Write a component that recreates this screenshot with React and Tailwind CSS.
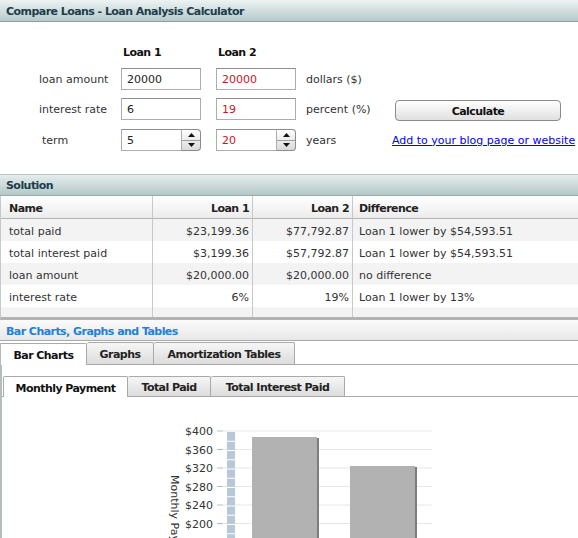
import React from "react";

function Box({ v, red, className = "" }) {
  return (
    <div
      className={`h-[22px] border border-[#adadad] border-t-[#8f8f8f] bg-white flex items-center pl-[5px] pt-[2px] ${red ? "text-[#d0141c]" : "text-[#222]"} ${className}`}
    >
      {v}
    </div>
  );
}

function Spin({ v, red }) {
  return (
    <div className="flex w-[80px] h-[22px]">
      <Box v={v} red={red} className="w-[61px]" />
      <div className="w-[19px] h-[22px] border border-[#8c8c8c] border-l-0 rounded-r-[4px] bg-linear-to-b from-white to-[#dadada] flex flex-col">
        <div className="flex-1 flex items-center justify-center border-b border-[#a0a0a0]">
          <svg width="7" height="4" viewBox="0 0 7 4"><path d="M0 4 L3.5 0 L7 4 Z" fill="#111" /></svg>
        </div>
        <div className="flex-1 flex items-center justify-center">
          <svg width="7" height="4" viewBox="0 0 7 4"><path d="M0 0 L3.5 4 L7 0 Z" fill="#111" /></svg>
        </div>
      </div>
    </div>
  );
}

function Row({ label, labelCls = "", left, right, unit, extra, className = "" }) {
  return (
    <div className={`flex items-center h-[22px] pl-[39px] ${className}`}>
      <div className={`w-[82px] pt-[2px] text-[#333] ${labelCls}`}>{label}</div>
      {left}
      <div className="w-[15px]" />
      {right}
      <div className="w-[10px]" />
      <div className="w-[86px] pt-[2px] text-[#333]">{unit}</div>
      {extra}
    </div>
  );
}

const rows = [
  ["total paid", "$23,199.36", "$77,792.87", "Loan 1 lower by $54,593.51"],
  ["total interest paid", "$3,199.36", "$57,792.87", "Loan 1 lower by $54,593.51"],
  ["loan amount", "$20,000.00", "$20,000.00", "no difference"],
  ["interest rate", "6%", "19%", "Loan 1 lower by 13%"],
];

function Chart() {
  const X = (x) => x - 2;
  const Y = (y) => y - 396;
  const ticks = [0, 1, 2, 3, 4, 5, 6].map((i) => ({ py: 430 + i * 18.5, label: `$${400 - 40 * i}` }));
  const seps = [];
  for (let y = 431 + 9.25; y < 540; y += 9.25) seps.push(y);
  return (
    <svg width="576" height="142" className="block" style={{ fontFamily: "'DejaVu Sans', Verdana, sans-serif" }}>
      {ticks.map((t) => (
        <g key={t.label}>
          <line x1={X(223)} x2={X(432)} y1={Y(t.py)} y2={Y(t.py)} stroke="#e6e6e6" strokeWidth="1" />
          <line x1={X(217)} x2={X(223)} y1={Y(t.py)} y2={Y(t.py)} stroke="#bdbdbd" strokeWidth="1" />
          <text x={X(213)} y={Y(t.py) + 4} textAnchor="end" fontSize="11" fill="#333">
            {t.label}
          </text>
        </g>
      ))}
      <rect x={X(227)} y={Y(431)} width="8" height="120" fill="#b7c9d8" />
      {seps.map((y) => (
        <line key={y} x1={X(227)} x2={X(235)} y1={Y(y)} y2={Y(y)} stroke="#ffffff" strokeWidth="1" />
      ))}
      <rect x={X(254)} y={Y(437)} width="65" height="120" fill="#7d7d7d" />
      <rect x={X(252)} y={Y(436)} width="65" height="120" fill="#b2b2b2" />
      <rect x={X(352)} y={Y(466)} width="65" height="120" fill="#7d7d7d" />
      <rect x={X(350)} y={Y(465)} width="65" height="120" fill="#b2b2b2" />
      <text transform={`translate(${X(171)} ${Y(474)}) rotate(90)`} fontSize="11" fill="#333">
        Monthly Payment
      </text>
    </svg>
  );
}

const B = "font-bold tracking-[-0.55px]";

export default function App() {
  return (
    <div className="w-[578px] h-[538px] overflow-hidden bg-white font-['DejaVu_Sans',Verdana,sans-serif] text-[11px] leading-[14px] text-[#333] flex flex-col">
      <div className={`h-[22px] shrink-0 bg-linear-to-b from-[#edf3f3] to-[#b6caca] border-b border-[#8e9e9e] flex items-center pl-[6px] pt-[2px] text-[#1d3d4c] ${B}`}>
        Compare Loans - Loan Analysis Calculator
      </div>

      <div className={`flex items-center h-[14px] mt-[22px] pl-[39px] pt-[3px] text-[#111] shrink-0 ${B}`}>
        <div className="w-[84px]" />
        <div className="w-[95px]">Loan 1</div>
        <div>Loan 2</div>
      </div>

      <Row className="mt-[10px] shrink-0" label="loan amount" left={<Box v="20000" className="w-[80px]" />} right={<Box v="20000" red className="w-[80px]" />} unit="dollars ($)" />
      <Row
        className="mt-[8px] shrink-0"
        label="interest rate"
        left={<Box v="6" className="w-[80px]" />}
        right={<Box v="19" red className="w-[80px]" />}
        unit="percent (%)"
        extra={
          <div className={`ml-[3px] mt-[3px] w-[166px] h-[21px] pt-[2px] rounded-[4px] border border-[#8b8b8b] bg-linear-to-b from-white to-[#e0e0e0] flex items-center justify-center text-[#111] ${B}`}>
            Calculate
          </div>
        }
      />
      <Row
        className="mt-[9px] shrink-0"
        label="term"
        labelCls="pl-[3px]"
        left={<Spin v="5" />}
        right={<Spin v="20" red />}
        unit="years"
        extra={<a className="text-[#0000ee] underline whitespace-nowrap pt-[1px]">Add to your blog page or website</a>}
      />

      <div className={`mt-[23px] h-[22px] shrink-0 bg-linear-to-b from-[#e4ecec] to-[#b4c9c9] border-t border-[#b9c4c4] border-b border-b-[#9aa8a8] flex items-center pl-[6px] pt-[2px] text-[#1d3d4c] ${B}`}>
        Solution
      </div>

      <div className="grid grid-cols-[152px_100px_100px_1fr] border-l border-[#c8c8c8] border-b-[3px] border-b-[#b3b3b3] shrink-0">
        <div className={`h-[23px] flex items-center pl-[8px] pt-[3px] text-[#222] border-r border-[#c8c8c8] border-b border-b-[#b5b5b5] bg-linear-to-b from-white to-[#ececec] ${B}`}>Name</div>
        <div className={`h-[23px] flex items-center justify-end pr-[3px] pt-[3px] text-[#222] border-r border-[#c8c8c8] border-b border-b-[#b5b5b5] bg-linear-to-b from-white to-[#ececec] ${B}`}>Loan 1</div>
        <div className={`h-[23px] flex items-center justify-end pr-[3px] pt-[3px] text-[#222] border-r border-[#c8c8c8] border-b border-b-[#b5b5b5] bg-linear-to-b from-white to-[#ececec] ${B}`}>Loan 2</div>
        <div className={`h-[23px] flex items-center pl-[6px] pt-[3px] text-[#222] border-b border-b-[#b5b5b5] bg-linear-to-b from-white to-[#ececec] ${B}`}>Difference</div>
        {rows.map((r, i) => {
          const bg = i % 2 === 0 ? "bg-[#f3f3f3]" : "bg-white";
          return (
            <React.Fragment key={r[0]}>
              <div className={`h-[22px] flex items-center pl-[8px] pt-[3px] border-r border-[#c8c8c8] ${bg}`}>{r[0]}</div>
              <div className={`h-[22px] flex items-center justify-end pr-[3px] pt-[3px] border-r border-[#c8c8c8] ${bg}`}>{r[1]}</div>
              <div className={`h-[22px] flex items-center justify-end pr-[3px] pt-[3px] border-r border-[#c8c8c8] ${bg}`}>{r[2]}</div>
              <div className={`h-[22px] flex items-center pl-[6px] pt-[3px] ${bg}`}>{r[3]}</div>
            </React.Fragment>
          );
        })}
        <div className="h-[10px] border-r border-[#c8c8c8] bg-[#f3f3f3]" />
        <div className="h-[10px] border-r border-[#c8c8c8] bg-[#f3f3f3]" />
        <div className="h-[10px] border-r border-[#c8c8c8] bg-[#f3f3f3]" />
        <div className="h-[10px] bg-[#f3f3f3]" />
      </div>

      <div className={`h-[21px] shrink-0 bg-linear-to-b from-[#fbfbfb] to-[#e8e8e8] border-b border-[#a9a9a9] flex items-center pl-[6px] pt-[3px] text-[#2180d8] ${B}`}>
        Bar Charts, Graphs and Tables
      </div>

      <div className="mt-[2px] h-[22px] shrink-0 flex items-end border-b border-[#a9a9a9]">
        <div className={`w-[87px] h-[22px] -mb-px pt-[3px] bg-white border border-b-0 border-[#a9a9a9] border-l-[#b5bcbc] rounded-tr-[2px] flex items-center justify-center text-[#111] ${B}`}>Bar Charts</div>
        <div className={`w-[67px] h-[22px] pt-[3px] bg-linear-to-b from-[#f6f6f6] to-[#dcdcdc] border-t border-r border-[#a9a9a9] rounded-t-[2px] flex items-center justify-center text-[#222] ${B}`}>Graphs</div>
        <div className={`w-[141px] h-[22px] pt-[3px] bg-linear-to-b from-[#f6f6f6] to-[#dcdcdc] border-t border-r border-[#a9a9a9] rounded-t-[2px] flex items-center justify-center text-[#222] ${B}`}>Amortization Tables</div>
      </div>

      <div className="flex-1 border-l-2 border-[#b5bcbc] pt-[11px] flex flex-col">
        <div className="h-[21px] shrink-0 flex items-end border-b border-[#a9a9a9] pl-[1px]">
          <div className={`w-[125px] h-[21px] -mb-px pt-[3px] bg-white border border-b-0 border-[#a9a9a9] rounded-t-[2px] flex items-center justify-center text-[#111] ${B}`}>Monthly Payment</div>
          <div className={`w-[83px] h-[20px] pt-[3px] bg-linear-to-b from-[#f6f6f6] to-[#dcdcdc] border-t border-r border-[#a9a9a9] rounded-t-[2px] flex items-center justify-center text-[#222] ${B}`}>Total Paid</div>
          <div className={`w-[134px] h-[20px] pt-[3px] bg-linear-to-b from-[#f6f6f6] to-[#dcdcdc] border-t border-r border-[#a9a9a9] rounded-t-[2px] flex items-center justify-center text-[#222] ${B}`}>Total Interest Paid</div>
        </div>
        <Chart />
      </div>
    </div>
  );
}
